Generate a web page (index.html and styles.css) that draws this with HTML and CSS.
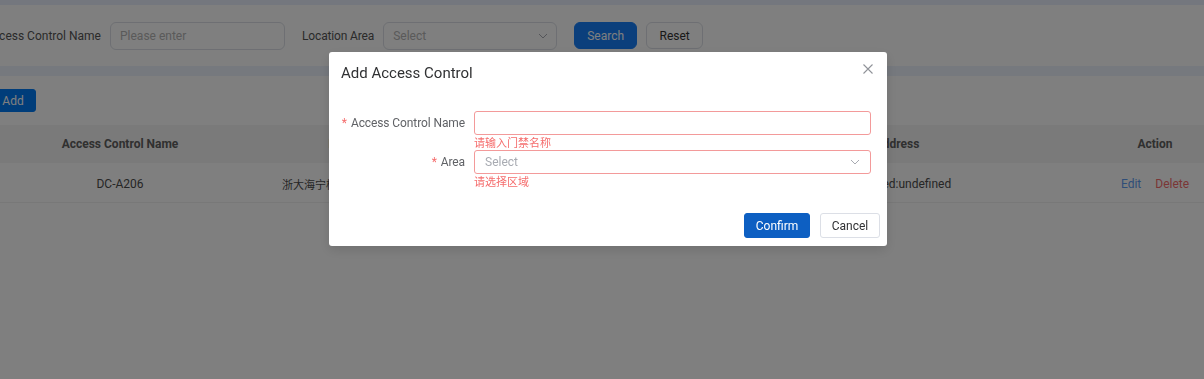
FILE: index.html
```html
<!DOCTYPE html>
<html lang="en">
<head>
    <meta charset="UTF-8">
    <meta name="viewport" content="width=device-width, initial-scale=1.0">
    <title>Access Control</title>
    <link rel="stylesheet" href="styles.css">
</head>
<body>
    <div class="page">
        <div class="topbar"></div>

        <div class="search">
            <span class="search-label">Access Control Name</span>
            <div class="field name-field">Please enter</div>
            <span class="search-label area-label">Location Area</span>
            <div class="field area-field">
                <span>Select</span>
                <svg class="chevron" width="10" height="6" viewBox="0 0 10 6"><path d="M1 1l4 4 4-4" fill="none" stroke="#a8abb2" stroke-width="1"/></svg>
            </div>
            <button class="btn btn-primary search-btn">Search</button>
            <button class="btn reset-btn">Reset</button>
        </div>

        <div class="band"></div>

        <div class="toolbar">
            <button class="btn btn-primary add-btn">Add</button>
        </div>

        <div class="table">
            <div class="row head">
                <div class="cell">Access Control Name</div>
                <div class="cell">Location Area</div>
                <div class="cell">Device ID</div>
                <div class="cell">Address</div>
                <div class="cell">Action</div>
            </div>
            <div class="row">
                <div class="cell">DC-A206</div>
                <div class="cell cjk">浙大海宁校区国际联合学院东区三号楼</div>
                <div class="cell">A206</div>
                <div class="cell">undefined:undefined</div>
                <div class="cell actions">
                    <span class="link-edit">Edit</span>
                    <span class="link-delete">Delete</span>
                </div>
            </div>
        </div>
    </div>

    <div class="overlay">
        <div class="dialog">
            <div class="dialog-header">
                <span class="dialog-title">Add Access Control</span>
                <svg class="close" width="10" height="10" viewBox="0 0 10 10"><path d="M0.5 0.5l9 9M9.5 0.5l-9 9" stroke="#909399" stroke-width="1.1"/></svg>
            </div>
            <div class="dialog-body">
                <div class="form-item">
                    <label class="form-label"><span class="req">*</span>Access Control Name</label>
                    <div class="form-control">
                        <div class="input is-error"></div>
                        <div class="form-error">请输入门禁名称</div>
                    </div>
                </div>
                <div class="form-item">
                    <label class="form-label"><span class="req">*</span>Area</label>
                    <div class="form-control">
                        <div class="input is-error select">
                            <span class="placeholder">Select</span>
                            <svg width="10" height="6" viewBox="0 0 10 6"><path d="M1 1l4 4 4-4" fill="none" stroke="#a8abb2" stroke-width="1"/></svg>
                        </div>
                        <div class="form-error">请选择区域</div>
                    </div>
                </div>
            </div>
            <div class="dialog-footer">
                <button class="btn btn-confirm">Confirm</button>
                <button class="btn btn-cancel">Cancel</button>
            </div>
        </div>
    </div>
</body>
</html>
```

FILE: styles.css
```css
body {
    margin: 0;
    font-family: Roboto, "Noto Sans CJK SC", sans-serif;
    font-size: 12px;
    color: #555;
    background: #fff;
    overflow: hidden;
}
.page {
    margin-left: -11px;
    width: 1215px;
}
.topbar {
    height: 5px;
    background: #e8eefc;
}
.search {
    height: 61px;
    display: flex;
    align-items: center;
    margin-left: -4px;
}
.search-label {
    color: #555;
    margin-right: 9px;
}
.area-label {
    letter-spacing: -0.15px;
}
.field {
    box-sizing: border-box;
    height: 28px;
    border: 1px solid #dcdfe6;
    border-radius: 6px;
    padding: 0 9px;
    display: flex;
    align-items: center;
    color: #b4b4b4;
}
.name-field {
    width: 175px;
    margin-right: 17px;
}
.area-field {
    width: 174px;
    margin-right: 17px;
    justify-content: space-between;
    padding-right: 8px;
}
.btn {
    font-family: Roboto, sans-serif;
    font-size: 12px;
    border: 1px solid #dcdfe6;
    background: #fff;
    color: #333;
    border-radius: 6px;
    padding: 0;
    cursor: pointer;
}
.btn-primary {
    background: #167ef8;
    border-color: #167ef8;
    color: #fff;
}
.search-btn {
    width: 63px;
    height: 27px;
    margin-right: 9px;
}
.reset-btn {
    width: 57px;
    height: 27px;
}
.band {
    height: 10px;
    background: #ecf2fc;
}
.toolbar {
    padding: 13px 0 13px 1px;
}
.add-btn {
    display: block;
    width: 46px;
    height: 23px;
    border-radius: 3px;
    background: #007af4;
    border-color: #007af4;
}
.table {
    width: 1215px;
}
.row {
    display: grid;
    grid-template-columns: 262px 230px 207px 418px 98px;
    height: 39px;
    border-bottom: 1px solid #f0f0f0;
}
.row.head {
    height: 38px;
    background: #f4f4f4;
    font-weight: bold;
    color: #606060;
    border-bottom: 0;
}
.cell {
    display: flex;
    align-items: center;
    justify-content: center;
    white-space: nowrap;
    overflow: hidden;
    color: #4c4c4c;
    padding-top: 2px;
}
.head .cell {
    color: #606060;
    padding-top: 0;
}
.cjk {
    font-size: 11px;
    justify-content: flex-start;
    padding-left: 31px;
}
.actions {
    gap: 14px;
}
.link-edit {
    color: #5e9cf0;
}
.link-delete {
    color: #f56c6c;
}
.overlay {
    position: fixed;
    inset: 0;
    background: rgba(0, 0, 0, 0.5);
}
.dialog {
    position: relative;
    margin: 52px 0 0 329px;
    width: 558px;
    background: #fff;
    border-radius: 3px;
    box-shadow: 0 4px 12px rgba(0, 0, 0, 0.12);
}
.dialog-header {
    padding: 11px 12px 0;
    height: 20px;
}
.dialog-title {
    font-size: 15px;
    line-height: 20px;
    color: #303133;
}
.close {
    position: absolute;
    top: 12px;
    right: 14px;
}
.dialog-body {
    padding-top: 28px;
}
.form-item {
    display: flex;
}
.form-label {
    width: 145px;
    padding-right: 9px;
    box-sizing: border-box;
    text-align: right;
    line-height: 24px;
    color: #606266;
    white-space: nowrap;
    letter-spacing: -0.1px;
}
.req {
    color: #f56c6c;
    margin-right: 4px;
}
.form-control {
    width: 397px;
}
.input {
    box-sizing: border-box;
    height: 24px;
    border: 1px solid #f39a9a;
    border-radius: 3px;
}
.select {
    display: flex;
    align-items: center;
    justify-content: space-between;
    padding: 0 10px;
}
.placeholder {
    color: #a8abb2;
}
.form-error {
    height: 13px;
    padding-top: 2px;
    font-size: 11px;
    line-height: 13px;
    color: #f56c6c;
}
.dialog-footer {
    display: flex;
    justify-content: flex-end;
    gap: 10px;
    padding: 24px 7px 8px 0;
}
.btn-confirm {
    width: 66px;
    height: 25px;
    border-radius: 3px;
    background: #0d5fc2;
    border-color: #0d5fc2;
    color: #fff;
}
.btn-cancel {
    width: 60px;
    height: 25px;
    border-radius: 3px;
    color: #303133;
}
```
